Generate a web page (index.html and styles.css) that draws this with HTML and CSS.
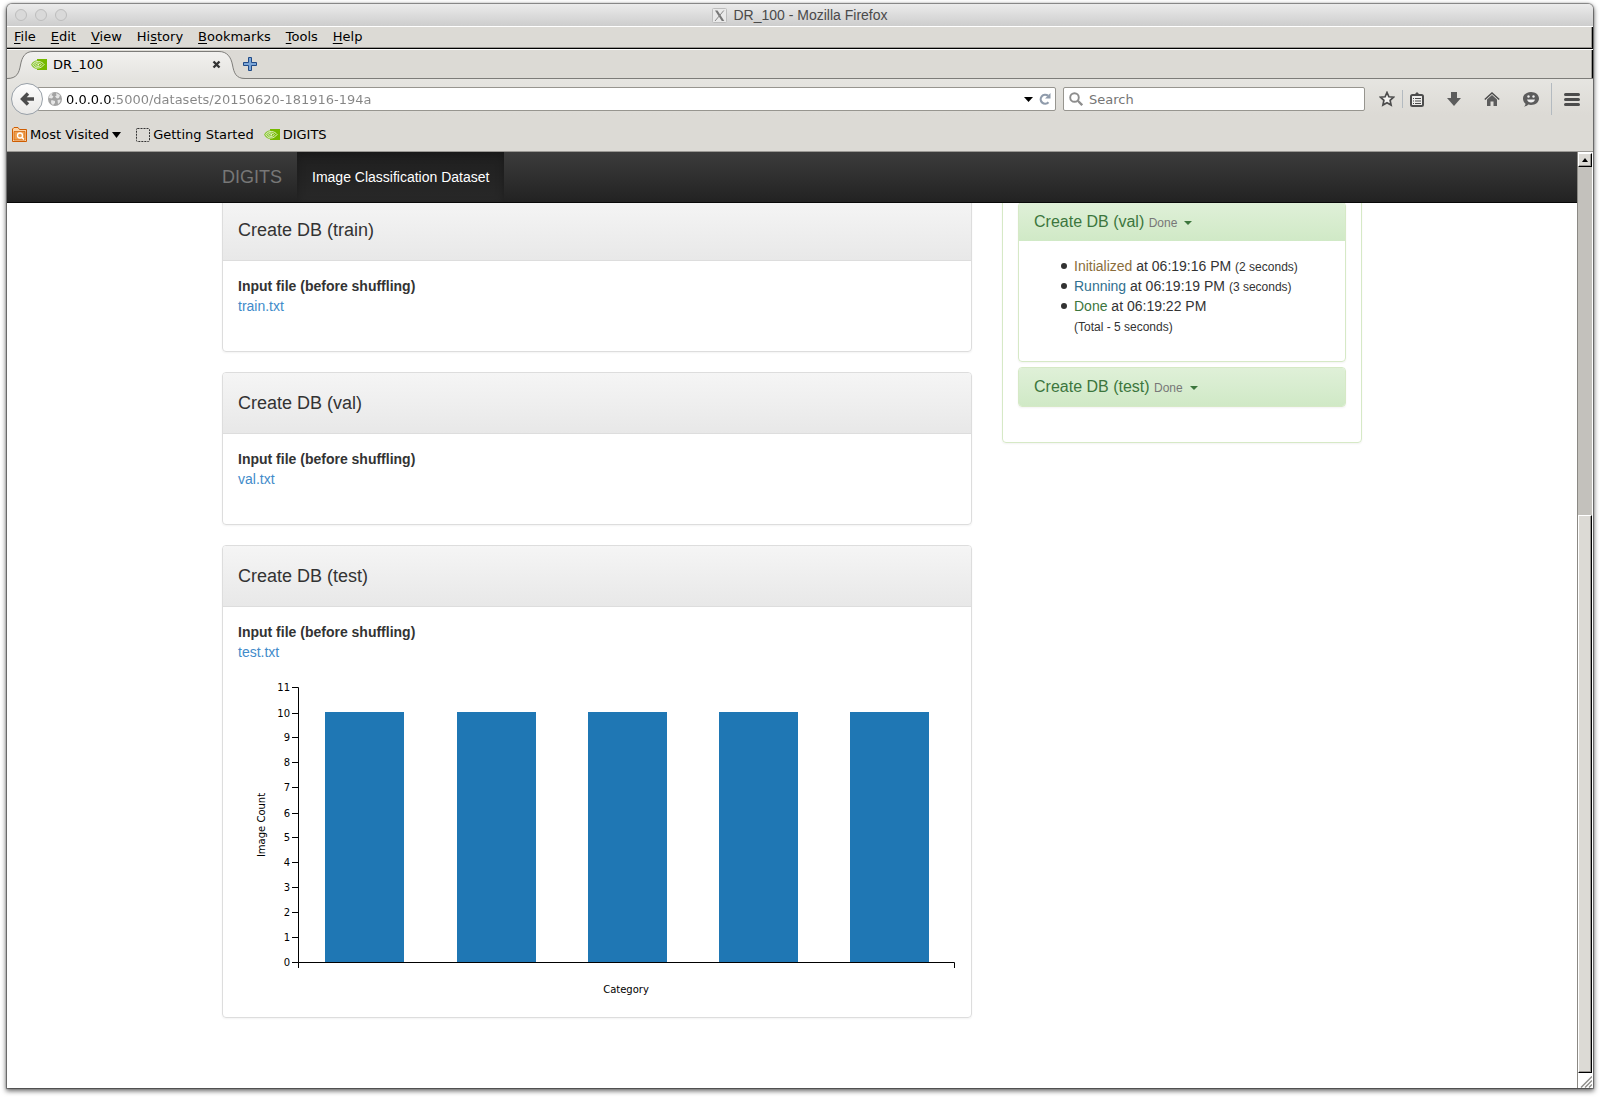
FILE: index.html
```html
<!DOCTYPE html>
<html lang="en">
<head>
<meta charset="utf-8">
<title>DR_100</title>
<link rel="stylesheet" href="styles.css">
</head>
<body>
<svg class="defs" aria-hidden="true">
  <symbol id="eye" viewBox="0 0 16 11">
    <path d="M6 0h10v11H6z" fill="#76b900"/>
    <path d="M0 5.500C2 2.500 4 1.200 6.500 1.200V10.200C3.500 10 1 8 0 5.500z" fill="#8cc63a"/>
    <path d="M1.800 5.500C3.200 3.300 5.500 2.400 7.500 2.500c2.500.1 4.500 1.600 5.600 3C11.500 7.500 9.500 9 7 9 4.500 8.900 2.800 7.400 1.800 5.500z" fill="none" stroke="#eaf6d2" stroke-width=".9"/>
    <path d="M4 5.500C5 4.200 6.200 3.900 7.400 4c1.400.1 2.300.8 3 1.600C9.500 6.900 8.500 7.500 7.100 7.500 5.700 7.400 4.700 6.700 4 5.500z" fill="none" stroke="#eaf6d2" stroke-width=".9"/>
    <circle cx="7.300" cy="5.700" r=".9" fill="#eaf6d2"/>
  </symbol>
</svg>

<div class="window">
  <header class="titlebar">
    <div class="lights"><i></i><i></i><i></i></div>
    <div class="window-title">
      <svg class="x-icon" viewBox="0 0 15 15"><rect x=".5" y=".5" width="14" height="14" rx="1" fill="#e9e9e9" stroke="#bdbdbd"/><path d="M3 2.500h2.500L12.300 13H9.800z" fill="#777"/><path d="M11.800 2.500L3 13" stroke="#888" fill="none"/></svg>
      <span>DR_100 - Mozilla Firefox</span>
    </div>
  </header>

  <nav class="menubar">
    <button><u>F</u>ile</button>
    <button><u>E</u>dit</button>
    <button><u>V</u>iew</button>
    <button>Hi<u>s</u>tory</button>
    <button><u>B</u>ookmarks</button>
    <button><u>T</u>ools</button>
    <button><u>H</u>elp</button>
  </nav>

  <div class="tabstrip">
    <div class="tab">
      <svg class="tab-shape" viewBox="0 0 238 29">
        <defs><linearGradient id="tabfill" x1="0" y1="0" x2="0" y2="1"><stop offset="0" stop-color="#f2f1ef"/><stop offset="1" stop-color="#e4e3df"/></linearGradient></defs>
        <path d="M0 29V27.500C10 27.500 12 22 13.500 14S18 .5 26 .5H212C220 .5 224 6 225.500 14S229 27.500 238 27.500V29z" fill="url(#tabfill)"/>
        <path d="M0 27.500C10 27.500 12 22 13.500 14S18 .5 26 .5H212C220 .5 224 6 225.500 14S229 27.500 238 27.500" fill="none" stroke="#7d7c79"/>
      </svg>
      <svg class="favicon"><use href="#eye"/></svg>
      <span class="tab-title">DR_100</span>
      <button class="tab-close" aria-label="Close tab"><svg width="9" height="9" viewBox="0 0 9 9"><path d="M1.500 1.500l6 6M7.500 1.500l-6 6" stroke="#333" stroke-width="2.400"/></svg></button>
    </div>
    <button class="new-tab" aria-label="New tab"><svg width="14" height="14" viewBox="0 0 14 14"><path d="M5.500.5h3v5h5v3h-5v5h-3v-5h-5v-3h5z" fill="#7ba6d8" stroke="#204a87"/></svg></button>
  </div>

  <div class="toolbar">
    <button class="back" aria-label="Back"><svg width="14" height="14" viewBox="0 0 14 14"><path d="M8 1.500L2.500 7 8 12.500M3 7h11" fill="none" stroke="#4c4c4c" stroke-width="3.400"/></svg></button>
    <div class="urlbar">
      <svg class="globe" viewBox="0 0 14 14"><circle cx="7" cy="7" r="7" fill="#a3a3a3"/><path d="M5 .6L3.500 3l2 1.500L4 6.500 1 6C1 3.500 3 1 5 .6zM8 1l4 2-1 3-2 .5-2-2 1.500-1zM3.500 8l3.500 1v2l-2 2C3 12 2.500 10 3.500 8zM9.500 8l3-.5c.3 2-1 4-2.500 4.500z" fill="#e6e6e6"/></svg>
      <input class="url" type="text" aria-label="Address" value="0.0.0.0:5000/datasets/20150620-181916-194a">
      <button class="url-btn" aria-label="History"><svg width="9" height="5" viewBox="0 0 9 5"><path d="M0 0h9L4.500 5z"/></svg></button>
      <button class="url-btn" aria-label="Reload"><svg width="12" height="12" viewBox="0 0 12 12"><path d="M9.500 9.300A4.500 4.500 0 1 1 9 2.700" fill="none" stroke="#8f9bab" stroke-width="2.200"/><path d="M11.500 0v5.500H6z" fill="#8f9bab"/></svg></button>
    </div>
    <div class="searchbar">
      <svg width="14" height="14" viewBox="0 0 14 14"><circle cx="5.500" cy="5.500" r="4.300" fill="none" stroke="#8d8d8d" stroke-width="1.900"/><path d="M8.800 8.800l4.400 4.400" stroke="#8d8d8d" stroke-width="2.300"/></svg>
      <input class="search" type="text" aria-label="Search" placeholder="Search">
    </div>
    <div class="tools">
      <button aria-label="Bookmark this page"><svg width="16" height="16" viewBox="0 0 16 16"><path d="M8 1.500l1.900 4.300 4.700.4-3.500 3.200 1 4.700L8 11.700l-4.100 2.400 1-4.700L1.400 6.200l4.700-.4z" fill="#f4f3f1" stroke="#4c4c4c" stroke-width="1.700"/></svg></button>
      <span class="sep short"></span>
      <button aria-label="Bookmarks"><svg width="14" height="15" viewBox="0 0 14 15"><path d="M4 3L7 0l3 3z" fill="#4c4c4c"/><rect x="1" y="3" width="12" height="11" rx="1.500" fill="#efeeec" stroke="#4c4c4c" stroke-width="2"/><path d="M5 6.500h6M5 9h6M5 11.500h6" stroke="#4c4c4c" stroke-width="1.200"/><path d="M3 6.500h1M3 9h1M3 11.500h1" stroke="#4c4c4c"/></svg></button>
      <button aria-label="Downloads"><svg width="14" height="14" viewBox="0 0 14 14"><path d="M4 0h6v6h4l-7 8-7-8h4z" fill="#5c5c5c"/></svg></button>
      <button aria-label="Home"><svg width="16" height="14" viewBox="0 0 16 14"><path d="M.8 7.500L8 1l7.200 6.500" fill="none" stroke="#4c4c4c" stroke-width="1.500"/><path d="M3 7.500L8 3l5 4.500V14H9.500V9.500h-3V14H3z" fill="#5c5c5c"/></svg></button>
      <button aria-label="Chat"><svg width="16" height="15" viewBox="0 0 16 15"><path d="M8 0c4.500 0 8 2.800 8 6.500S12.500 13 8 13c-1 0-2-.1-2.800-.4C4 14 2.500 14.500 1 14.500c1-.8 1.500-1.800 1.500-2.800C1 10.500 0 8.600 0 6.500 0 2.800 3.500 0 8 0z" fill="#5c5c5c"/><path d="M4 7.500h8C11.500 9.600 10 10.500 8 10.500S4.500 9.600 4 7.500z" fill="#eee"/><circle cx="5.500" cy="4.500" r="1.200" fill="#eee"/><circle cx="10.500" cy="4.500" r="1.200" fill="#eee"/></svg></button>
      <span class="sep tall"></span>
      <button aria-label="Menu"><svg width="16" height="13" viewBox="0 0 16 13"><path d="M1.500 1.500h13M1.500 6.500h13M1.500 11.500h13" stroke="#4c4c4c" stroke-width="3" stroke-linecap="round"/></svg></button>
    </div>
  </div>

  <div class="bookmarks">
    <button class="bookmark"><svg width="15" height="15" viewBox="0 0 15 15"><path d="M.5 14.500V2l1.500-1.500h4L7.500 2.500h7v12z" fill="#fbd3a6" stroke="#ce5c00"/><path d="M2 4.500h11v8.500H2z" fill="#f0a04f" stroke="#ce5c00" stroke-width=".7"/><circle cx="8" cy="8.500" r="2.500" fill="none" stroke="#fff" stroke-width="1.300"/><path d="M10 10.500l2 2" stroke="#fff" stroke-width="1.400"/></svg>Most Visited<svg width="9" height="6" viewBox="0 0 9 6"><path d="M0 0h9L4.500 6z"/></svg></button>
    <a class="bookmark page-link" href="#"><svg width="14" height="14" viewBox="0 0 14 14"><rect x=".5" y=".5" width="13" height="13" rx="1" fill="none" stroke="#333" stroke-dasharray="2 1"/></svg>Getting Started</a>
    <a class="bookmark" href="#"><svg class="favicon"><use href="#eye"/></svg>DIGITS</a>
  </div>

  <div class="viewport">
    <div class="page">
      <nav class="navbar">
        <div class="container navbar-inner">
          <a class="brand" href="#">DIGITS</a>
          <a class="active" href="#">Image Classification Dataset</a>
        </div>
      </nav>
      <main class="container row">
        <div class="main-col">
          <section class="panel">
            <div class="panel-heading"><h4>Create DB (train)</h4></div>
            <div class="panel-body"><b>Input file (before shuffling)</b><a href="#">train.txt</a></div>
          </section>
          <section class="panel">
            <div class="panel-heading"><h4>Create DB (val)</h4></div>
            <div class="panel-body"><b>Input file (before shuffling)</b><a href="#">val.txt</a></div>
          </section>
          <section class="panel">
            <div class="panel-heading"><h4>Create DB (test)</h4></div>
            <div class="panel-body with-chart"><b>Input file (before shuffling)</b><a href="#">test.txt</a>
              <svg class="chart" viewBox="0 0 718 340" role="img" aria-label="Image count by category">
                <g fill="#1f77b4">
                  <rect x="87" y="50" width="79" height="250"/>
                  <rect x="219" y="50" width="79" height="250"/>
                  <rect x="350" y="50" width="79" height="250"/>
                  <rect x="481" y="50" width="79" height="250"/>
                  <rect x="612" y="50" width="79" height="250"/>
                </g>
                <path class="axis" d="M54 25.500H60.500V300.500H54M60.500 306V300.500H716.500V306M54 51.500h6M54 75.500h6M54 100.500h6M54 125.500h6M54 151.500h6M54 175.500h6M54 200.500h6M54 225.500h6M54 250.500h6M54 275.500h6"/>
                <g text-anchor="end">
                  <text x="52" y="29">11</text>
                  <text x="52" y="55">10</text>
                  <text x="52" y="79">9</text>
                  <text x="52" y="104">8</text>
                  <text x="52" y="129">7</text>
                  <text x="52" y="155">6</text>
                  <text x="52" y="179">5</text>
                  <text x="52" y="204">4</text>
                  <text x="52" y="229">3</text>
                  <text x="52" y="254">2</text>
                  <text x="52" y="279">1</text>
                  <text x="52" y="304">0</text>
                </g>
                <text x="388" y="331" text-anchor="middle">Category</text>
                <text transform="translate(27 163) rotate(-90)" text-anchor="middle">Image Count</text>
              </svg>
            </div>
          </section>
        </div>
        <aside class="side-col">
          <div class="status">
            <section class="panel success">
              <div class="panel-heading"><h5>Create DB (val) <small>Done</small><span class="caret"></span></h5></div>
              <div class="panel-body">
                <ul>
                  <li><span class="warn">Initialized</span> at 06:19:16 PM <small>(2 seconds)</small></li>
                  <li><span class="info">Running</span> at 06:19:19 PM <small>(3 seconds)</small></li>
                  <li><span class="ok">Done</span> at 06:19:22 PM<br><small>(Total - 5 seconds)</small></li>
                </ul>
              </div>
            </section>
            <section class="panel success">
              <div class="panel-heading"><h5>Create DB (test) <small>Done</small><span class="caret"></span></h5></div>
            </section>
          </div>
        </aside>
      </main>
    </div>
    <div class="scrollbar">
      <button class="up" aria-label="Scroll up"><svg width="6" height="4" viewBox="0 0 6 4"><path d="M3 0l3 4H0z"/></svg></button>
      <div class="track"></div>
      <div class="thumb"></div>
      <svg class="grip" viewBox="0 0 14 15"><path d="M3 14.500L14 3.500M7 14.500l7-7M11 14.500l3-3" stroke="#8f8e8b" stroke-width="1.500"/></svg>
    </div>
  </div>
</div>
</body>
</html>
```
FILE: styles.css
```css
* { box-sizing: border-box; }

body {
  margin: 0;
  height: 100vh;
  padding: 4px 7px 10px;
  overflow: hidden;
  background: #fff;
  font: 13px "DejaVu Sans", sans-serif;
  color: #000;
}

button {
  padding: 0;
  border: 0;
  background: none;
  font: inherit;
  color: inherit;
}

a { text-decoration: none; color: inherit; }
svg { display: block; flex: none; }
.defs { position: absolute; width: 0; height: 0; }

.window {
  display: flex;
  flex-direction: column;
  height: 100%;
  border-radius: 5px 5px 0 0;
  background: #dcdad5;
  box-shadow: 0 0 1px 1px rgba(0, 0, 0, .4), 0 2px 5px 1px rgba(0, 0, 0, .6);
}

/* Window title */
.titlebar {
  display: flex;
  align-items: center;
  position: relative;
  flex: none;
  height: 22px;
  border-radius: 5px 5px 0 0;
  background: linear-gradient(#ebebeb, #cdcdcd);
}
.lights { display: flex; gap: 8px; padding-left: 8px; }
.lights i {
  width: 12px;
  height: 12px;
  border: 1px solid #bdbdbd;
  border-radius: 50%;
  background: #d9d9d9;
}
.window-title {
  position: absolute;
  inset: 0;
  display: flex;
  align-items: center;
  justify-content: center;
  gap: 6px;
  font: 14px "Liberation Sans", sans-serif;
  color: #4a4a4a;
}
.x-icon { width: 15px; height: 15px; }

/* Menus */
.menubar {
  display: flex;
  flex: none;
  align-items: center;
  gap: 15px;
  height: 23px;
  padding: 0 7px 2px;
  border-top: 1px solid #fff;
  border-bottom: 1px solid #000;
  box-shadow: inset -1px 0 #000, inset -2px 0 #9a9894, inset 0 -1px #9a9894;
}
.menubar u { text-underline-offset: 2px; }

/* Tabs */
.tabstrip {
  display: flex;
  flex: none;
  height: 30px;
  padding-top: 1px;
  border-top: 1px solid #fff;
  box-shadow: inset 0 -1px #7d7c79, inset -1px 0 #000, inset -2px 0 #9a9894;
}
.tab {
  position: relative;
  display: flex;
  align-items: center;
  width: 236px;
  height: 28px;
  padding: 0 22px 2px 24px;
}
.tab-shape { position: absolute; left: 0; top: 0; width: 238px; height: 29px; }
.favicon { position: relative; width: 16px; height: 11px; }
.tab-title { position: relative; flex: 1; padding-left: 6px; }
.tab-close { position: relative; }
.new-tab { margin-bottom: 2px; }

/* Navigation toolbar */
.toolbar {
  display: flex;
  flex: none;
  align-items: center;
  height: 36px;
  padding: 4px 13px 0 4px;
  background: linear-gradient(#e6e5e1, #dcdad5);
}
.back {
  display: flex;
  align-items: center;
  justify-content: center;
  z-index: 1;
  width: 32px;
  height: 32px;
  border: 1px solid #98a0a8;
  border-radius: 50%;
  background: linear-gradient(#fdfdfd, #e9e8e6);
}
.urlbar, .searchbar {
  display: flex;
  align-items: center;
  height: 24px;
  border: 1px solid #97958f;
  border-radius: 2px;
  background: #fff;
}
.urlbar {
  flex: 1;
  gap: 6px;
  margin-left: -6px;
  padding: 0 4px 0 10px;
}
.searchbar {
  gap: 6px;
  flex: 0 1 302px;
  margin-left: 7px;
  padding-left: 5px;
}
.globe { width: 14px; height: 14px; }
input {
  flex: 1;
  min-width: 0;
  padding: 0;
  border: 0;
  outline: 0;
  background: none;
  font: inherit;
}
.url {
  margin-left: -2px;
  color: transparent;
  background: linear-gradient(90deg, #000 45px, #858585 45px);
  -webkit-background-clip: text;
  background-clip: text;
}
.search::placeholder { color: #757575; opacity: 1; }
.tools {
  display: flex;
  align-items: center;
  gap: 23px;
  padding-left: 14px;
}
.sep { width: 1px; background: #b3bac0; }
.short { height: 18px; margin: 0 -16px; }
.tall { height: 32px; margin: 0 -11px; }

/* Bookmarks */
.bookmarks {
  display: flex;
  flex: none;
  align-items: center;
  gap: 10px;
  height: 37px;
  padding: 3px 5px 0;
  border-bottom: 1px solid #9a9894;
}
.bookmark { display: flex; align-items: center; gap: 3px; }
.page-link { margin-left: 5px; }

/* Page */
.viewport {
  display: flex;
  flex: 1;
  min-height: 0;
  background: #fff;
}
.page {
  position: relative;
  flex: 1;
  overflow: hidden;
  font: 14px/20px "Liberation Sans", Arial, sans-serif;
  color: #333;
}
.container {
  max-width: 1170px;
  margin: 0 auto;
  padding: 0 15px;
}
.navbar {
  position: absolute;
  inset: 0 0 auto;
  z-index: 1;
  border-bottom: 1px solid #080808;
  background: linear-gradient(#3c3c3c, #222);
}
.navbar-inner { display: flex; }
.navbar a { padding: 15px; }
.navbar .brand { margin-left: -15px; font-size: 18px; color: #777; }
.navbar .active {
  background: linear-gradient(#1f1f1f, #282828);
  box-shadow: inset 0 3px 9px rgba(0, 0, 0, .25);
  color: #fff;
}

.row { display: flex; gap: 30px; }
.main-col { flex: 750; padding-top: 47px; }
.side-col { flex: 360; }

.panel {
  margin-bottom: 20px;
  border: 1px solid #ddd;
  border-radius: 4px;
  box-shadow: 0 1px 2px rgba(0, 0, 0, .05);
}
.panel-heading {
  padding: 20px 15px;
  border-bottom: 1px solid #ddd;
  border-radius: 3px 3px 0 0;
  background: linear-gradient(#f5f5f5, #e8e8e8);
}
h4, h5 { margin: 0; font-weight: 400; line-height: 20px; }
h4 { font-size: 18px; }
h5 { font-size: 16px; line-height: 18px; }
.panel-body { padding: 15px 15px 35px; }
.panel-body.with-chart { padding-bottom: 15px; }
.panel-body > b, .panel-body > a { display: block; }
.panel-body > a { width: fit-content; color: #428bca; }

.chart { width: 100%; height: auto; font: 10px "DejaVu Sans", sans-serif; }
.axis { fill: none; stroke: #000; }

.status {
  padding: 49px 15px 15px;
  border: 1px solid #d6e9c6;
  border-radius: 4px;
  box-shadow: 0 1px 2px rgba(0, 0, 0, .05);
}
.success { margin-bottom: 5px; border-color: #d6e9c6; }
.success:last-child { margin-bottom: 20px; }
.success .panel-heading {
  padding: 10px 15px;
  border: 0;
  background: linear-gradient(#dff0d8, #d0e9c6);
  color: #3c763d;
}
.success:last-child .panel-heading { border-radius: 3px; }
.success .panel-body { padding: 15px; }
small { font-size: 12px; line-height: 1; }
h5 small { color: #777; }
.caret {
  display: inline-block;
  margin-left: 7px;
  vertical-align: middle;
  border: 4px solid transparent;
  border-top-color: #3c763d;
  border-bottom: 0;
}
ul { margin: 0 0 10px; padding-left: 40px; list-style: none; }
li::before {
  content: "";
  display: inline-block;
  width: 6px;
  height: 6px;
  margin: 0 7px 2px -13px;
  border-radius: 50%;
  background: #333;
}
.warn { color: #8a6d3b; }
.info { color: #31708f; }
.ok { color: #3c763d; }

/* Scrollbar */
.scrollbar {
  display: flex;
  flex-direction: column;
  width: 16px;
  padding-top: 1px;
  border-left: 1px solid #8b8984;
  border-right: 1px solid #fff;
}
.up, .thumb {
  border: 1px solid #fff;
  border-right-color: #000;
  border-bottom-color: #000;
  background: #dcdad5;
  box-shadow: inset -1px -1px #9a9894;
}
.up {
  display: flex;
  align-items: center;
  justify-content: center;
  height: 14px;
}
.track { flex: 349; background: #c3c1bc; }
.thumb { flex: 558; }
.grip { width: 14px; height: 15px; }
```
